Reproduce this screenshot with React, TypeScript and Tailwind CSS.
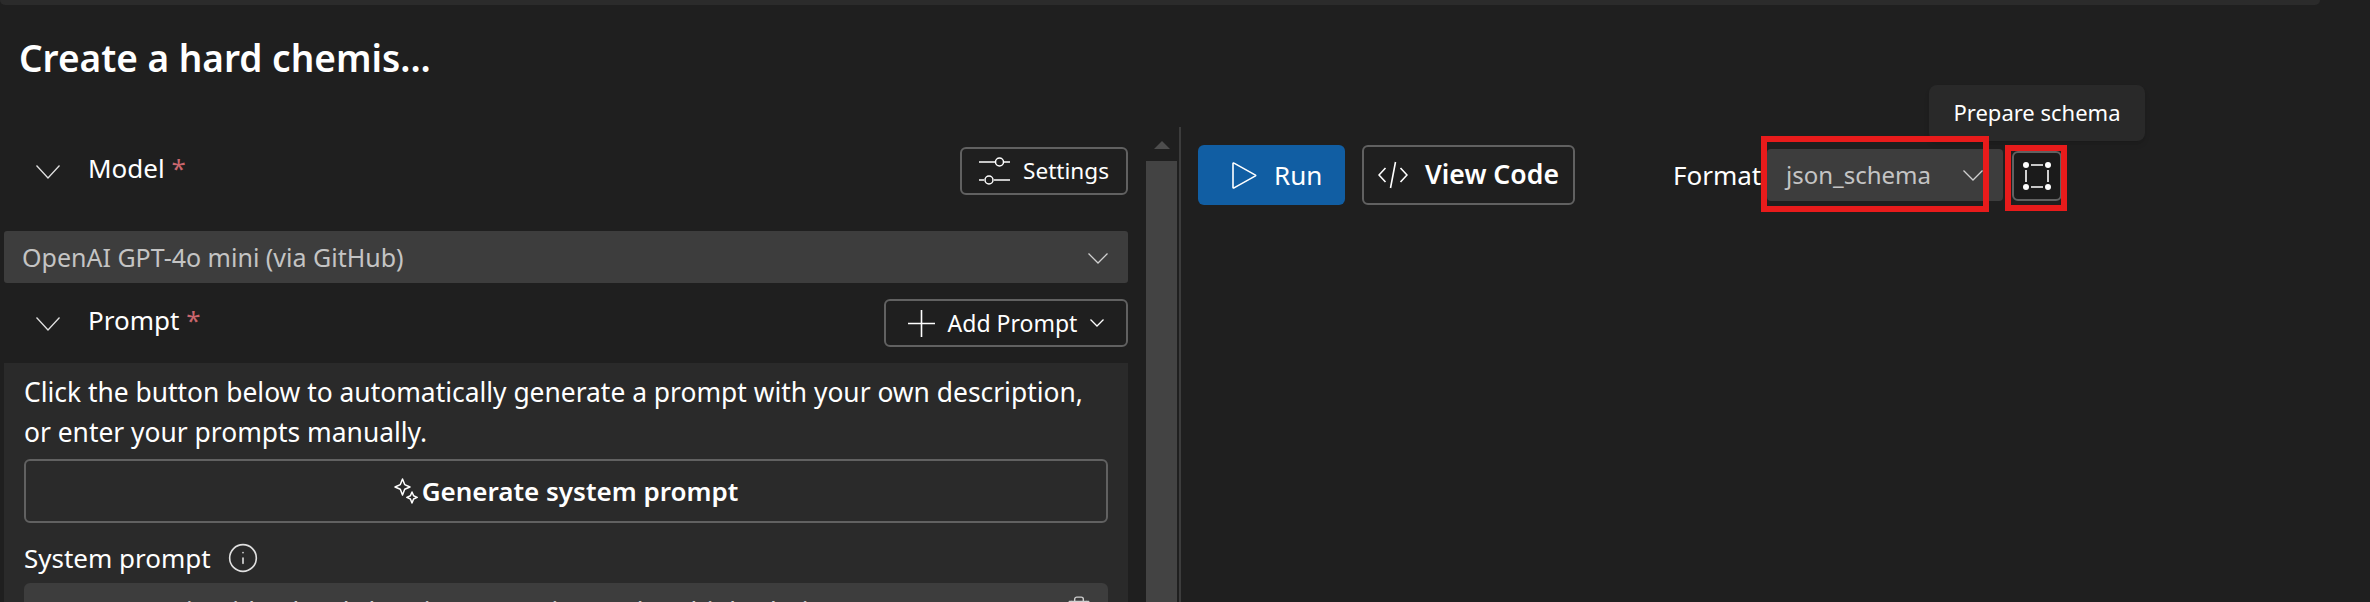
import { Info, Trash2 } from 'lucide-react';

function Chevron({ w, h, className }: { w: number; h: number; className?: string }) {
  return (
    <svg width={w} height={h} viewBox={`0 0 ${w} ${h}`} fill="none" stroke="currentColor" strokeWidth="1.3" className={className}>
      <path d={`M0.5 0.5L${w / 2} ${h - 1}L${w - 0.5} 0.5`} />
    </svg>
  );
}

function SettingsIcon() {
  return (
    <svg width="31" height="28" viewBox="0 0 31 28" fill="none" stroke="currentColor" strokeWidth="1.5">
      <path d="M0 5h16M25 5h6M0 23h5M15 23h16" />
      <circle cx="20.5" cy="5" r="4" />
      <circle cx="10" cy="23" r="4" />
    </svg>
  );
}

function PlusIcon() {
  return (
    <svg width="27" height="27" viewBox="0 0 27 27" stroke="currentColor" strokeWidth="1.6">
      <path d="M13.5 0v27M0 13.5h27" />
    </svg>
  );
}

function PlayIcon() {
  return (
    <svg width="25" height="27" viewBox="0 0 25 27" fill="none" stroke="currentColor" strokeWidth="1.6" strokeLinejoin="round">
      <path d="M1 1.5v24a0.6 0.6 0 0 0 1 0.4l21.5-12a0.5 0.5 0 0 0 0-0.8L2 1.1a0.6 0.6 0 0 0-1 0.4z" />
    </svg>
  );
}

function CodeIcon() {
  return (
    <svg width="30" height="28" viewBox="0 0 30 28" fill="none" stroke="currentColor" strokeWidth="1.6">
      <path d="M7.5 7L1 14l6.5 7M22.5 7L29 14l-6.5 7M17.5 1L12.5 27" />
    </svg>
  );
}

function SchemaIcon() {
  return (
    <svg width="28" height="28" viewBox="0 0 28 28" fill="white">
      <circle cx="3" cy="3" r="3" />
      <circle cx="25" cy="3" r="3" />
      <circle cx="3" cy="25" r="3" />
      <circle cx="25" cy="25" r="3" />
      <path d="M8 2.2h12v1.6H8zM8 24.2h12v1.6H8zM2.2 8h1.6v12H2.2zM24.2 8h1.6v12h-1.6z" />
    </svg>
  );
}

function SparkleIcon() {
  return (
    <svg width="24" height="26" viewBox="0 0 24 26" fill="none" stroke="currentColor" strokeWidth="1.5" strokeLinejoin="round">
      <path d="M8.5 1l2.2 5.6L16 9l-5.3 2.3-2.2 5.7-2.2-5.7L1 9l5.3-2.4z" />
      <path d="M18 14l1.6 3.8 3.6 1.6-3.6 1.6L18 25l-1.6-4-3.6-1.6 3.6-1.6z" />
    </svg>
  );
}

function SectionHead({ label }: { label: string }) {
  return (
    <div className="flex items-center">
      <Chevron w={24} h={14} className="ml-[32px] mt-[2px] text-[#e0e0e0]" />
      <span className="-mt-[7px] ml-[28px] text-[26px] leading-[36px] text-white">
        {label} <span className="text-[#c9666d]">*</span>
      </span>
    </div>
  );
}

export default function App() {
  return (
    <div className="relative h-[602px] w-[2370px] overflow-hidden bg-[#1f1f1f] font-['Noto_Sans','Open_Sans',sans-serif] text-white">
      <div className="mr-[50px] h-[5px] rounded-b-md bg-[#2b2b2b]" />
      <h1 className="ml-[19px] mt-[28px] text-[37px] leading-[50px] font-semibold">Create a hard chemis...</h1>

      <div className="mt-[44px] flex h-[475px]">
        <div className="w-[1128px] pl-[4px] pt-[20px]">
          <div className="flex h-[48px] items-center justify-between">
            <SectionHead label="Model" />
            <button className="flex h-[48px] w-[168px] items-center justify-center gap-[13px] rounded-[6px] border-2 border-[#616161] text-[22.6px]">
              <SettingsIcon />
              Settings
            </button>
          </div>

          <div className="mt-[36px] flex h-[52px] items-center justify-between rounded-[3px] bg-[#3d3d3d] pl-[18px] pr-[20px] pt-[2px] text-[25px] text-[#c4c4c4]">
            OpenAI GPT-4o mini (via GitHub)
            <Chevron w={20} h={11} className="text-[#d0d0d0]" />
          </div>

          <div className="mt-[16px] flex h-[48px] items-center justify-between">
            <SectionHead label="Prompt" />
            <button className="flex h-[48px] w-[244px] items-center justify-center gap-[13px] rounded-[6px] border-2 border-[#616161] text-[23px]">
              <PlusIcon />
              Add Prompt
              <Chevron w={14} h={8} />
            </button>
          </div>

          <div className="mt-[16px] h-[239px] overflow-hidden bg-[#2a2a2a] px-[20px] pt-[9px]">
            <p className="whitespace-nowrap text-[26.4px] leading-[40px]">
              Click the button below to automatically generate a prompt with your own description,
              <br />
              or enter your prompts manually.
            </p>
            <button className="mt-[7px] flex h-[64px] w-[1084px] items-center justify-center gap-[4px] rounded-[6px] border-2 border-[#616161] text-[26px] font-semibold">
              <SparkleIcon />
              Generate system prompt
            </button>
            <div className="mt-[15px] flex h-[40px] items-center gap-[15px] text-[26px]">
              System prompt
              <Info size={32} strokeWidth={1.2} className="ml-[1px] text-[#e0e0e0]" />
            </div>
            <div className="mt-[5px] flex h-[60px] w-[1084px] justify-between rounded-t-[6px] bg-[#3d3d3d] pl-[22px] pr-[16px] pt-[9px] text-[26px] leading-[36px] text-[#d0d0d0]">
              <span className="truncate">Create a quiz with a hard chemistry question and multiple choice answers</span>
              <Trash2 size={26} strokeWidth={1.3} className="mt-[3px] shrink-0" />
            </div>
          </div>
        </div>

        <div className="ml-[18px] flex w-[31px] flex-col items-stretch">
          <div className="flex h-[34px] items-center justify-center pt-[2px]">
            <div className="h-0 w-0 border-x-[8px] border-b-[8px] border-x-transparent border-b-[#4d4d4d]" />
          </div>
          <div className="flex-1 bg-[#434343]" />
        </div>

        <div className="ml-[2px] w-[2px] bg-[#3c3c3c]" />

        <div className="flex flex-1 items-start pl-[17px] pt-[18px]">
          <button className="flex h-[60px] w-[147px] items-center gap-[17px] rounded-[6px] bg-[#115ea3] pl-[34px] text-[26px]">
            <PlayIcon />
            Run
          </button>
          <button className="ml-[17px] flex h-[60px] w-[213px] items-center justify-center gap-[17px] rounded-[6px] border-2 border-[#616161] text-[26.6px] font-semibold">
            <CodeIcon />
            View Code
          </button>
          <span className="ml-[98px] h-[60px] w-[88px] text-[26px] leading-[60px]">Format</span>
          <div className="ml-[6px] mt-[4px] flex h-[52px] w-[236px] items-center justify-between rounded-[4px] bg-[#3d3d3d] pl-[19px] pr-[20px] text-[24px] text-[#c4c4c4]">
            json_schema
            <Chevron w={20} h={11} className="text-[#d0d0d0]" />
          </div>
          <button className="ml-[9px] mt-[6px] flex h-[50px] w-[50px] items-center justify-center rounded-[6px] border-2 border-[#616161] bg-[#1b1b1b]">
            <SchemaIcon />
          </button>
        </div>
      </div>

      <div className="absolute left-[1929px] top-[85px] flex h-[56px] w-[216px] items-center justify-center rounded-[8px] bg-[#292929] pb-[2px] text-[22px] whitespace-nowrap shadow-md">
        Prepare schema
      </div>
      <div className="absolute left-[1761px] top-[136px] h-[76px] w-[228px] border-[6px] border-[#e81b1b]" />
      <div className="absolute left-[2005px] top-[145px] h-[66px] w-[62px] border-[6px] border-[#e81b1b]" />
    </div>
  );
}
